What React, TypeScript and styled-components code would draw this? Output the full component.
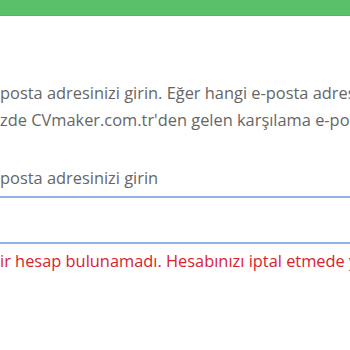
import { createGlobalStyle, styled } from "styled-components"

const GlobalStyle = createGlobalStyle`
  html, body {
    margin: 0;
    padding: 0;
    background: #ffffff;
    overflow: hidden;
  }
  body {
    font-family: "Open Sans", "Noto Sans", sans-serif;
  }
`

// hesap silme: e-posta doğrulama adımı
const App = () => {
  return (
    <Page>
      <GlobalStyle />
      <TopBar />
      <Content>
        <Intro>
          posta adresinizi girin. Eğer hangi e-posta adresi ile kaydolduğunuzu hatırlamıyorsanız,
          <br />
          zde CVmaker.com.tr'den gelen karşılama e-postasını arayın.
        </Intro>
        <Field>
          <Input placeholder="posta adresinizi girin" />
        </Field>
        <Field $empty />
        <ErrorText>
          ir hesap bulunamadı. Hesabınızı iptal etmede yardıma ihtiyacınız varsa bize ulaşın.
        </ErrorText>
      </Content>
    </Page>
  )
}

export default App

const Page = styled.div`
  width: 350px;
  height: 350px;
  overflow: hidden;
  display: flex;
  flex-direction: column;
`

const TopBar = styled.div`
  height: 15px;
  flex-shrink: 0;
  background: #5bc06a;
  border-bottom: 1px solid #52b660;
`

const Content = styled.div`
  display: flex;
  flex-direction: column;
  padding-top: 63px;
`

const Intro = styled.p`
  margin: 0;
  font-size: 16.4px;
  line-height: 27px;
  color: #666666;
  white-space: nowrap;
`

const Field = styled.div<{ $empty?: boolean }>`
  display: flex;
  align-items: flex-end;
  height: ${(p) => (p.$empty ? "44px" : "auto")};
  margin-top: ${(p) => (p.$empty ? "0" : "28px")};
  border-bottom: 2px solid #8fb3e2;
`

const Input = styled.input`
  width: 100%;
  border: none;
  outline: none;
  background: transparent;
  padding: 0 0 3px 0;
  height: 32px;
  line-height: 28px;
  font-family: "Open Sans", "Noto Sans", sans-serif;
  font-size: 16.4px;
  color: #555555;

  &::placeholder {
    color: #666666;
    opacity: 1;
  }
`

const ErrorText = styled.div`
  margin-top: 6px;
  font-size: 16.4px;
  line-height: 22px;
  color: #d8222e;
  white-space: nowrap;
`
